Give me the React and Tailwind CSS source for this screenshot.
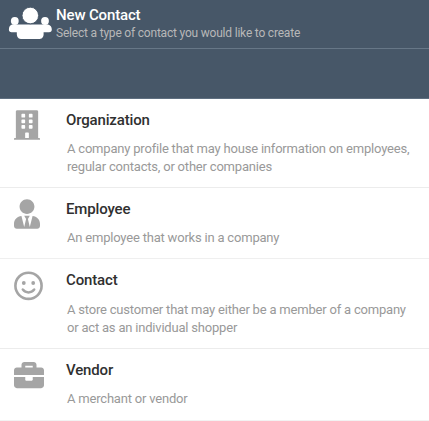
import { FaBuilding, FaUserTie, FaBriefcase } from "react-icons/fa";

function SmileIcon() {
  return (
    <svg viewBox="0 0 29 30" className="h-[30px] w-[29px]" fill="none" stroke="currentColor">
      <circle cx="14.5" cy="14.8" r="13.1" strokeWidth="2.6" />
      <circle cx="9.8" cy="12" r="1.9" fill="currentColor" stroke="none" />
      <circle cx="19.2" cy="12" r="1.9" fill="currentColor" stroke="none" />
      <path d="M8.8 18.6Q11 21.4 14.5 21.4T20.2 18.6" strokeWidth="2.5" strokeLinecap="round" />
    </svg>
  );
}

const contactTypes = [
  {
    title: "Organization",
    lines: ["A company profile that may house information on employees,", "regular contacts, or other companies"],
    icon: <FaBuilding className="h-[30px] w-[26px]" />,
    height: "h-[89px]",
    iconPad: "pt-[1px]",
    textPad: "pt-[9px]",
    rule: "border-[#ececec]",
  },
  {
    title: "Employee",
    lines: ["An employee that works in a company"],
    icon: <FaUserTie className="h-[30px] w-[26px]" />,
    height: "h-[71px]",
    iconPad: "pt-[1px]",
    textPad: "pt-[9px]",
    rule: "border-[#efefef]",
  },
  {
    title: "Contact",
    lines: ["A store customer that may either be a member of a company", "or act as an individual shopper"],
    icon: <SmileIcon />,
    height: "h-[90px]",
    iconPad: "pt-[2px]",
    textPad: "pt-[10px]",
    rule: "border-[#ececec]",
  },
  {
    title: "Vendor",
    lines: ["A merchant or vendor"],
    icon: <FaBriefcase className="h-[30px] w-[30px]" />,
    height: "h-[72px]",
    iconPad: "pt-[1px]",
    textPad: "pt-[9px]",
    rule: "border-[#f2f2f2]",
  },
];

function PeopleIcon() {
  return (
    <svg viewBox="0 0 44 34" className="h-[34px] w-[44px] shrink-0" fill="#fff">
      <circle cx="6.8" cy="14" r="3.9" />
      <circle cx="37" cy="14" r="3.9" />
      <path d="M4 17.5H40Q43.8 18.5 43.8 22.5Q43.8 25.3 41 25.3H35.6Q36.3 32 31.5 32H12.8Q8.3 32 8.8 25.3H3.6Q0.9 25.3 0.9 22.5Q0.9 18.5 4 17.5Z" />
      <circle cx="22.3" cy="8.5" r="8.3" stroke="#475768" strokeWidth="0.9" />
    </svg>
  );
}

export default function App() {
  return (
    <div className="h-[421px] w-[429px] overflow-hidden bg-white font-['Roboto',sans-serif]">
      <header className="h-[99px] border-b border-[#5f6f80] bg-[#475768]">
        <div className="flex h-[49px] border-b border-[#677787] pt-[7px] pl-[8px]">
          <PeopleIcon />
          <div className="pl-[4px] whitespace-nowrap">
            <h1 className="text-[15px] leading-[17px] font-medium tracking-[-0.15px] text-white">New Contact</h1>
            <p className="text-[12px] leading-[18px] tracking-[-0.2px] text-[#b8b8b8]">Select a type of contact you would like to create</p>
          </div>
        </div>
      </header>
      <ul>
        {contactTypes.map((type) => (
          <li key={type.title} className={`flex border-b pt-[10px] pl-[14px] ${type.height} ${type.rule}`}>
            <div className={`w-[52px] shrink-0 text-[#a5a5a5] ${type.iconPad}`}>{type.icon}</div>
            <div className="whitespace-nowrap">
              <h2 className="text-[15px] leading-[22px] font-medium tracking-[-0.15px] text-[#303030]">{type.title}</h2>
              <div className={`pl-px text-[13px] leading-[17.5px] tracking-[-0.2px] text-[#999] ${type.textPad}`}>
                {type.lines.map((line) => (
                  <p key={line}>{line}</p>
                ))}
              </div>
            </div>
          </li>
        ))}
      </ul>
    </div>
  );
}
